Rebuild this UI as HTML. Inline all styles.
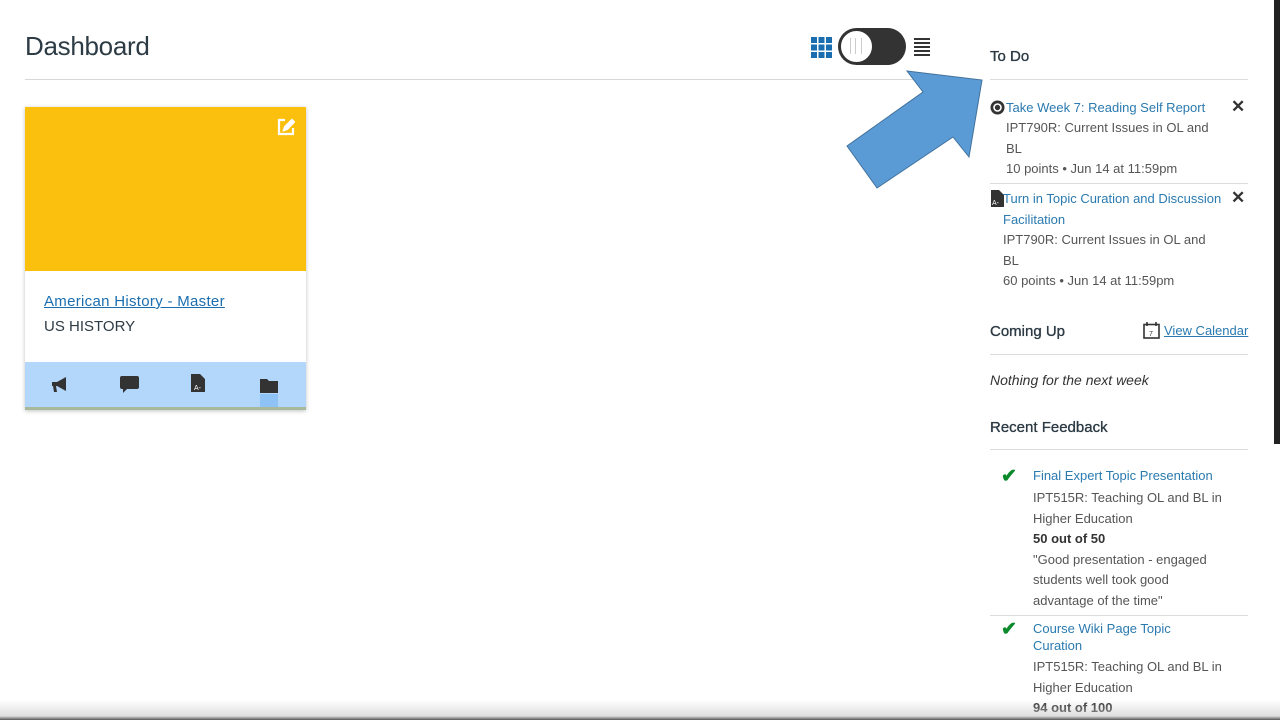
<!DOCTYPE html>
<html><head><meta charset="utf-8"><style>
*{margin:0;padding:0;box-sizing:border-box}
body{width:1280px;height:720px;background:#fff;font-family:"Liberation Sans",sans-serif;position:relative;overflow:hidden;color:#2d3b45}
.a{position:absolute}
h1{position:absolute;left:25px;top:31px;font-size:26px;font-weight:400;color:#2d3b45;letter-spacing:-0.3px}
.t{font-size:13px;line-height:20.5px}
.lnk{color:#2a7ab0}
.g{color:#555}
.hd{font-size:15px;color:#2d3b45;font-weight:400;text-shadow:0 0 .6px #2d3b45,0 0 .3px #2d3b45}
.hr{position:absolute;height:1px;background:#ddd}
</style></head><body>
<h1>Dashboard</h1>
<div class="hr" style="left:25px;top:79px;width:908px;background:#d8d8d8"></div>
<svg class="a" style="left:811px;top:37px" width="21" height="21" viewBox="0 0 21 21" fill="#1a6eb0">
<rect x="0" y="0" width="6" height="6"/><rect x="7.5" y="0" width="6" height="6"/><rect x="15" y="0" width="6" height="6"/>
<rect x="0" y="7.5" width="6" height="6"/><rect x="7.5" y="7.5" width="6" height="6"/><rect x="15" y="7.5" width="6" height="6"/>
<rect x="0" y="15" width="6" height="6"/><rect x="7.5" y="15" width="6" height="6"/><rect x="15" y="15" width="6" height="6"/></svg>
<div class="a" style="left:838px;top:28px;width:68px;height:37px;border-radius:19px;background:#333"></div>
<div class="a" style="left:839px;top:29px;width:35px;height:35px;border-radius:50%;background:#fff;border:2px solid #333"></div>
<div class="a" style="left:850px;top:38px;width:12px;height:16px;border-left:1px solid #ccc;border-right:1px solid #ccc"></div>
<div class="a" style="left:855px;top:38px;width:1px;height:16px;background:#ccc"></div>
<svg class="a" style="left:914px;top:38px" width="16" height="18" viewBox="0 0 16 18" fill="#333"><rect y="0" width="16" height="2"/><rect y="4" width="16" height="2"/><rect y="8" width="16" height="2"/><rect y="12" width="16" height="2"/><rect y="16" width="16" height="2"/></svg>
<div class="a" style="left:25px;top:107px;width:281px;height:303px;box-shadow:0 1px 4px rgba(0,0,0,.25);background:#fff">
<div style="height:164px;background:#fbbf0e;position:relative">
<svg class="a" style="left:252px;top:11px" width="18" height="18" viewBox="0 0 18 18" fill="none" stroke="#fff" stroke-width="2.2"><path d="M8 2H2v14h14v-6"/><path d="M15 2l-7 7-1 3 3-1 7-7z" fill="#fff"/></svg>
</div>
<div class="a" style="left:19px;top:186px;font-size:15px;color:#1a6eb0;text-decoration:underline;letter-spacing:0.3px">American History - Master</div>
<div class="a" style="left:19px;top:211px;font-size:15px;color:#2d3b45">US HISTORY</div>
<div class="a" style="left:0;top:255px;width:281px;height:45px;background:#b3d7fb"></div>
<div class="a" style="left:0;top:300px;width:281px;height:3px;background:#a8b89a"></div>
<svg class="a" style="left:26px;top:270px" width="18" height="16" viewBox="0 0 18 16" fill="#333"><path d="M1 5h5l9-5v14l-9-5H5l1 6H3L2 9H1z"/></svg>
<svg class="a" style="left:95px;top:269px" width="19" height="17" viewBox="0 0 19 17" fill="#333"><path d="M2 0h15a2 2 0 012 2v9a2 2 0 01-2 2H7l-4 4v-4H2a2 2 0 01-2-2V2a2 2 0 012-2z"/></svg>
<svg class="a" style="left:166px;top:267px" width="14" height="18" viewBox="0 0 14 18"><path d="M0 0h9l5 5v13H0z" fill="#333"/><text x="3" y="16" font-size="7" fill="#fff" font-family="Liberation Sans">A-</text></svg>
<svg class="a" style="left:235px;top:272px" width="18" height="14" viewBox="0 0 18 14" fill="#333"><path d="M0 0h7l2 2h9v12H0z"/></svg>
<div class="a" style="left:235px;top:287px;width:18px;height:13px;background:#8fc3f5"></div>
</div>
<svg class="a" style="left:0;top:0" width="1280" height="720"><polygon points="982,80 969,157 953,137 877,188 847,146 923,92 907,71" fill="#5b9bd5" stroke="#41719c" stroke-width="1"/></svg>
<div class="a hd" style="left:990px;top:48px">To Do</div>
<div class="hr" style="left:990px;top:79px;width:258px"></div>
<svg class="a" style="left:990px;top:100px" width="15" height="15" viewBox="0 0 15 15"><circle cx="7.5" cy="7.5" r="7" fill="#333"/><circle cx="7.5" cy="7.5" r="3.5" fill="none" stroke="#fff" stroke-width="1.6"/></svg>
<div class="a t lnk" style="left:1006px;top:98px">Take Week 7: Reading Self Report</div>
<div class="a" style="left:1231px;top:97px;font-size:17px;font-weight:bold;color:#333">✕</div>
<div class="a t g" style="left:1006px;top:118px;width:220px">IPT790R: Current Issues in OL and BL<br>10 points • Jun 14 at 11:59pm</div>
<div class="hr" style="left:990px;top:183px;width:258px"></div>
<svg class="a" style="left:991px;top:190px" width="13" height="17" viewBox="0 0 13 17"><path d="M0 0h8l5 5v12H0z" fill="#333"/><text x="1" y="15" font-size="7" fill="#fff" font-family="Liberation Sans">A-</text></svg>
<div class="a t lnk" style="left:1003px;top:189px;width:225px">Turn in Topic Curation and Discussion Facilitation</div>
<div class="a" style="left:1231px;top:188px;font-size:17px;font-weight:bold;color:#333">✕</div>
<div class="a t g" style="left:1003px;top:230px;width:220px">IPT790R: Current Issues in OL and BL<br>60 points • Jun 14 at 11:59pm</div>
<div class="a hd" style="left:990px;top:323px">Coming Up</div>
<svg class="a" style="left:1143px;top:322px" width="17" height="17" viewBox="0 0 17 17" fill="none" stroke="#333" stroke-width="1.6"><rect x="1" y="2.5" width="15" height="13.5"/><path d="M4 0v4M13 0v4"/><text x="6" y="14" font-size="7" fill="#333" stroke="none" font-family="Liberation Sans">7</text></svg>
<div class="a lnk" style="left:1164px;top:323px;font-size:13px;text-decoration:underline">View Calendar</div>
<div class="hr" style="left:990px;top:354px;width:258px"></div>
<div class="a" style="left:990px;top:372px;font-size:14px;font-style:italic;color:#333">Nothing for the next week</div>
<div class="a hd" style="left:990px;top:419px">Recent Feedback</div>
<div class="hr" style="left:990px;top:449px;width:258px"></div>
<div class="a" style="left:1001px;top:465px;font-size:19px;color:#0b8a2b;font-weight:bold">✔</div>
<div class="a t lnk" style="left:1033px;top:466px">Final Expert Topic Presentation</div>
<div class="a t g" style="left:1033px;top:488px;width:200px">IPT515R: Teaching OL and BL in Higher Education<br><b style="color:#333">50 out of 50</b><br>"Good presentation - engaged students well took good advantage of the time"</div>
<div class="hr" style="left:990px;top:615px;width:258px"></div>
<div class="a" style="left:1001px;top:618px;font-size:19px;color:#0b8a2b;font-weight:bold">✔</div>
<div class="a lnk" style="left:1033px;top:620px;width:170px;font-size:13px;line-height:17px">Course Wiki Page Topic Curation</div>
<div class="a t g" style="left:1033px;top:657px;width:200px">IPT515R: Teaching OL and BL in Higher Education<br><b style="color:#333">94 out of 100</b></div>
<div class="a" style="left:1274px;top:0;width:6px;height:444px;background:#222"></div>
<div class="a" style="left:0;top:700px;width:1280px;height:20px;background:linear-gradient(rgba(255,255,255,0),rgba(200,200,200,.6) 80%,#555)"></div>
</body></html>
